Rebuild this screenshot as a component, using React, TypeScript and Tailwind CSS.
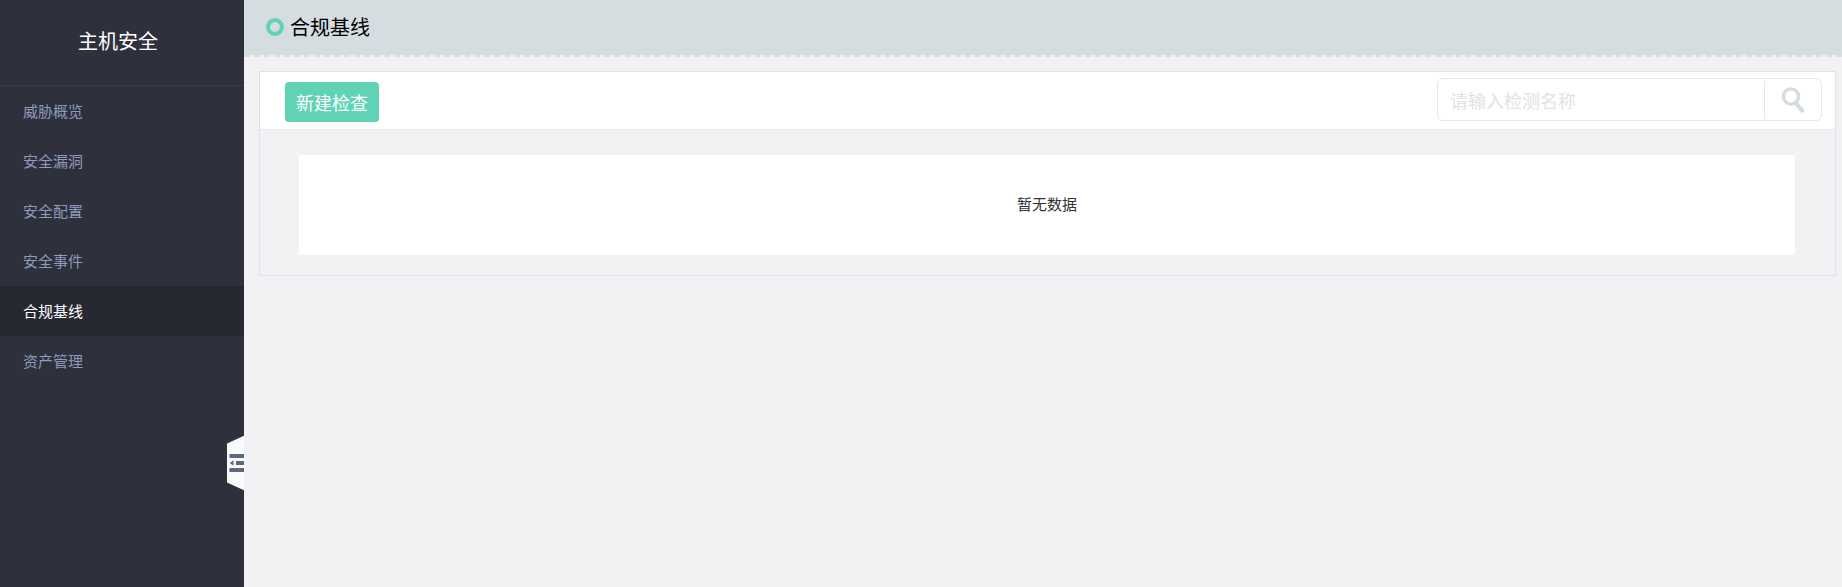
const menu = ['威胁概览', '安全漏洞', '安全配置', '安全事件', '合规基线', '资产管理'];

function Sidebar() {
  return (
    <aside className="relative w-61 shrink-0 bg-[#2e303c]">
      <h2 className="flex h-[86px] items-center justify-center border-b border-[#3a3d49] pr-2 pb-1 text-[20px] leading-7 text-white">
        主机安全
      </h2>
      <nav>
        <ul>
          {menu.map((name) => (
            <li key={name}>
              <a
                href="#"
                aria-current={name === '合规基线' ? 'page' : undefined}
                className="flex h-[50px] items-center pl-[23px] text-[15px] leading-6 text-[#8f9bbd] aria-[current=page]:bg-[#262932] aria-[current=page]:text-white"
              >
                {name}
              </a>
            </li>
          ))}
        </ul>
      </nav>
      <button type="button" aria-label="收起菜单" className="absolute top-[435px] right-0 h-14 w-[17px]">
        <svg viewBox="0 0 17 56" className="block h-14 w-[17px]" aria-hidden="true">
          <path d="M0 8.5L17 0.8V55.2L0 47.5Z" fill="#f9fafa" />
          <path d="M2.5 19H17V23H2.5ZM2.5 33H17V37H2.5ZM9 26H17V30H9ZM2.7 28L6.5 25.3V30.7Z" fill="#5b6980" />
        </svg>
      </button>
    </aside>
  );
}

function SearchBox() {
  return (
    <form
      role="search"
      onSubmit={(e) => e.preventDefault()}
      className="flex h-[43px] w-[385px] items-center rounded-md border border-[#e4e6e8] bg-white"
    >
      <input
        type="text"
        aria-label="检测名称"
        placeholder="请输入检测名称"
        className="h-full min-w-0 flex-1 pl-3 text-[18px] text-[#333] outline-none placeholder:text-[#e2e2e2]"
      />
      <button type="submit" aria-label="搜索" className="flex h-[38px] w-[57px] items-center justify-center border-l border-[#e4e6e8]">
        <svg viewBox="0 0 24 26" className="h-[26px] w-6" fill="none" stroke="#d3dbe4" aria-hidden="true">
          <circle cx="10" cy="9.5" r="7.6" strokeWidth="3.4" />
          <path d="M14.8 16L21.2 23.6" strokeWidth="4" strokeLinecap="round" />
        </svg>
      </button>
    </form>
  );
}

export default function App() {
  return (
    <div className="flex min-h-screen bg-[#f2f2f5] font-['Noto_Sans_CJK_SC',sans-serif]">
      <Sidebar />
      <div className="min-w-0 flex-1">
        <header className="flex h-[57px] items-center gap-1.5 border-b-2 border-dashed border-[#d9e0e3] bg-[#d5dde0] bg-clip-padding pb-0.5 pl-[22px]">
          <span className="size-[18px] rounded-full border-4 border-[#60d2b5]" />
          <h1 className="text-[20px] leading-7 text-black">合规基线</h1>
        </header>
        <main className="mt-3.5 mr-1.5 ml-[15px] border border-[#dfe3e6]">
          <div className="flex h-[58px] items-start justify-between border-b border-[#e8eaec] bg-white pt-1.5 pr-[13px] pl-[25px]">
            <button type="button" className="mt-1 h-10 rounded bg-[#60d2b5] px-[11px] text-[18px] leading-6 text-white">
              新建检查
            </button>
            <SearchBox />
          </div>
          <div className="pt-[25px] pr-10 pb-5 pl-[39px]">
            <p className="flex h-[100px] items-center justify-center bg-white pb-0.5 text-[15px] leading-6 text-[#333]">暂无数据</p>
          </div>
        </main>
      </div>
    </div>
  );
}
